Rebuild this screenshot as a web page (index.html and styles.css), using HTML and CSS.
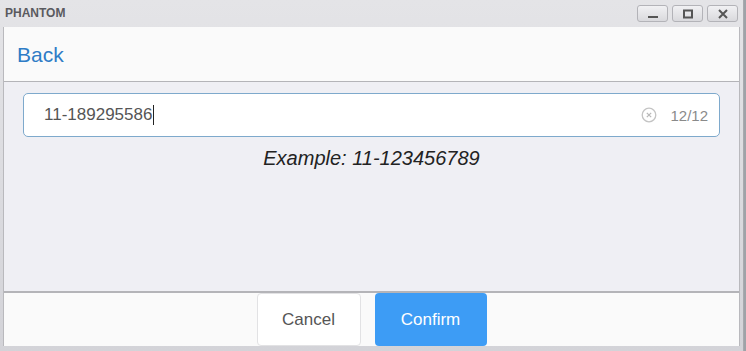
FILE: index.html
```html
<!DOCTYPE html>
<html lang="en">

<head>
    <meta charset="UTF-8">
    <meta name="viewport" content="width=device-width, initial-scale=1">
    <title>PHANTOM</title>
    <link rel="stylesheet" href="styles.css">
</head>

<body>

    <div class="window">
        <div class="titlebar">
            <span class="app-name">PHANTOM</span>
            <div class="win-buttons">
                <button class="win-btn">
                    <svg width="12" height="10" viewBox="0 0 12 10"><rect x="1" y="7" width="10" height="2" fill="#555" /></svg>
                </button>
                <button class="win-btn">
                    <svg width="12" height="10" viewBox="0 0 12 10"><rect x="2" y="1.5" width="8" height="7" fill="none" stroke="#555" stroke-width="2" /></svg>
                </button>
                <button class="win-btn">
                    <svg width="12" height="10" viewBox="0 0 12 10"><path d="M2 1 L10 9 M10 1 L2 9" stroke="#555" stroke-width="2" /></svg>
                </button>
            </div>
        </div>

        <div class="app">
            <div class="header">
                <a class="back-link">Back</a>
            </div>

            <div class="content">
                <div class="field">
                    <div class="field-value">11-189295586<span class="caret"></span></div>
                    <svg class="clear-icon" width="16" height="16" viewBox="0 0 16 16">
                        <circle cx="8" cy="8" r="6.8" fill="none" stroke="#c4c4c4" stroke-width="1.3" />
                        <path d="M5.8 5.8 L10.2 10.2 M10.2 5.8 L5.8 10.2" stroke="#b8b8b8" stroke-width="1.2" />
                    </svg>
                    <span class="counter">12/12</span>
                </div>
                <p class="hint">Example: 11-123456789</p>
            </div>

            <div class="footer">
                <button class="btn btn-cancel">Cancel</button>
                <button class="btn btn-confirm">Confirm</button>
            </div>
        </div>
    </div>

</body>

</html>
```

FILE: styles.css
```css
* {
    box-sizing: border-box;
}

html,
body {
    margin: 0;
    padding: 0;
}

body {
    font-family: "Liberation Sans", Arial, sans-serif;
    background-color: #9ea3a8;
    width: 746px;
    height: 351px;
    overflow: hidden;
}

.window {
    width: 744px;
    height: 351px;
    display: flex;
    flex-direction: column;
    background: linear-gradient(#e4e4e7, #d3d3d8);
    border-right: 1px solid #a9a9ae;
    padding: 0 3px 5px 3px;
}

.titlebar {
    height: 27px;
    display: flex;
    align-items: flex-start;
    justify-content: space-between;
    flex-shrink: 0;
}

.app-name {
    font-size: 12px;
    font-weight: bold;
    color: #5a5a5f;
    margin-top: 6px;
    margin-left: 2px;
}

.win-buttons {
    display: flex;
    gap: 4px;
    margin-top: 5px;
    margin-right: 2px;
}

.win-btn {
    width: 31px;
    height: 17px;
    padding: 0;
    border: 1px solid #b3b3b8;
    border-radius: 3px;
    background: linear-gradient(#f1f1f3, #d9d9dd);
    display: flex;
    align-items: center;
    justify-content: center;
}

.app {
    flex: 1;
    display: flex;
    flex-direction: column;
    background-color: #efeff4;
    border: 1px solid #b9b9bd;
    border-top: none;
    border-bottom: none;
}

.header {
    height: 55px;
    background-color: #fafafa;
    border-bottom: 1px solid #b4b4b8;
    display: flex;
    align-items: center;
    padding-left: 13px;
    padding-top: 1px;
}

.back-link {
    font-size: 21px;
    color: #2e7cc6;
}

.content {
    flex: 1;
    padding: 11px 19px 0 19px;
}

.field {
    height: 44px;
    background-color: #fff;
    border: 1px solid #7ea9cc;
    border-radius: 5px;
    display: flex;
    align-items: center;
    padding: 0 11px 0 20px;
}

.field-value {
    flex: 1;
    font-size: 17px;
    color: #555;
    display: flex;
    align-items: center;
}

.caret {
    display: inline-block;
    width: 1px;
    height: 20px;
    background-color: #222;
    margin-left: 1px;
}

.clear-icon {
    margin-right: 13px;
}

.counter {
    font-size: 15px;
    color: #8a8a8a;
}

.hint {
    margin: 10px 0 0 0;
    text-align: center;
    font-size: 20px;
    font-style: italic;
    color: #222;
}

.footer {
    height: 55px;
    background-color: #fafafa;
    border-top: 2px solid #b4b4b8;
    display: flex;
    justify-content: center;
    gap: 14px;
}

.btn {
    font-family: "Liberation Sans", Arial, sans-serif;
    font-size: 17px;
    border-radius: 4px;
    cursor: pointer;
    height: 100%;
}

.btn-cancel {
    width: 104px;
    background-color: #fff;
    border: 1px solid #e2e2e4;
    color: #555;
}

.btn-confirm {
    width: 112px;
    background-color: #3d9cf5;
    border: none;
    color: #fff;
}
```
